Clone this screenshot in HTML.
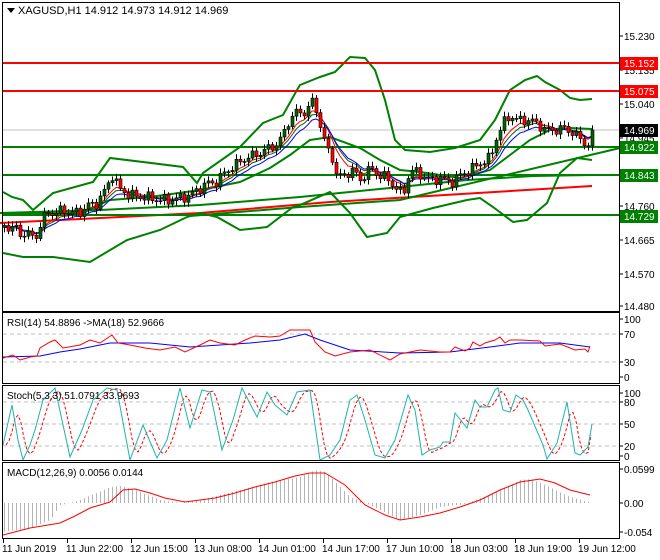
<!DOCTYPE html>
<html><head><meta charset="utf-8"><style>
html,body{margin:0;padding:0;background:#fff;}
svg{display:block;font-family:"Liberation Sans",sans-serif;font-size:10px;}
</style></head><body>
<svg id="s" width="660" height="560" xmlns="http://www.w3.org/2000/svg">
<rect width="660" height="560" fill="#fff"/>
<g id="g"></g>
<g fill="none" stroke="#000" stroke-width="1">
<rect x="2.5" y="2.5" width="617" height="309"/>
<rect x="2.5" y="312.5" width="617" height="71"/>
<rect x="2.5" y="385.5" width="617" height="75"/>
<rect x="2.5" y="462.5" width="617" height="76"/>
</g>
<path d="M7 8 L15 8 L11 13 Z" fill="#000"/>
<text x="18" y="14" font-size="11">XAGUSD,H1  14.912 14.973 14.912 14.969</text>
<text x="7" y="326">RSI(14) 54.8896  -&gt;MA(18) 52.9666</text>
<text x="7" y="399">Stoch(5,3,3) 51.0791 33.9693</text>
<text x="7" y="476">MACD(12,26,9) 0.0056 0.0144</text>
<g id="ax"></g>
</svg>
<script>
var g=document.getElementById('g'),ax=document.getElementById('ax');
var NS='http://www.w3.org/2000/svg';
function el(p,t,a,tx){var e=document.createElementNS(NS,t);for(var k in a)e.setAttribute(k,a[k]);if(tx!=null)e.textContent=tx;p.appendChild(e);return e;}
function interp(kp,x){if(x<=kp[0][0])return kp[0][1];for(var i=1;i<kp.length;i++){if(x<=kp[i][0]){var a=kp[i-1],b=kp[i];return a[1]+(b[1]-a[1])*(x-a[0])/(b[0]-a[0]);}}return kp[kp.length-1][1];}
function pl(kp,col,w,dash){var d=kp.map(function(p){return p[0]+','+p[1]}).join(' ');var a={points:d,fill:'none',stroke:col,'stroke-width':w};if(dash)a['stroke-dasharray']=dash;el(g,'polyline',a);}
function hl(y,col,w){el(g,'line',{x1:3,x2:619,y1:y,y2:y,stroke:col,'stroke-width':w});}
function dash(y){el(g,'line',{x1:3,x2:619,y1:y,y2:y,stroke:'#c0c0c0','stroke-width':1,'stroke-dasharray':'4,3'});}
// main horizontal lines
hl(130,'#c0c0c0',1);
// bollinger
var up=[[3,192],[12,197],[23,200],[33,210],[53,193],[93,182],[110,158],[143,162],[183,167],[197,183],[203,173],[240,147],[263,123],[283,115],[297,90],[300,85],[320,77],[335,72],[350,57],[365,58],[375,70],[385,100],[395,140],[405,150],[430,152],[455,148],[480,140],[495,120],[510,90],[525,80],[537,76],[545,82],[560,90],[570,98],[580,100],[592,99]];
var mid=[[3,214],[80,213],[110,200],[150,197],[200,190],[240,182],[270,168],[290,155],[310,140],[330,137],[360,148],[380,160],[400,170],[420,172],[440,175],[460,178],[490,170],[510,155],[530,140],[550,130],[570,128],[592,129]];
var lo=[[3,253],[23,257],[53,257],[90,262],[127,240],[160,230],[187,217],[200,213],[217,217],[240,230],[267,227],[293,207],[300,205],[330,192],[350,213],[367,237],[387,233],[400,217],[433,208],[467,200],[480,198],[493,207],[513,222],[527,220],[547,203],[560,173],[577,158],[592,160]];
pl([[0,223],[200,213],[330,202],[592,186]],'#ff0000',2);
pl([[0,213],[100,210],[200,205],[300,197],[400,187],[467,180],[533,176],[592,175]],'#008000',2);
pl([[190,216],[300,207],[400,200],[620,148]],'#008000',2);
pl(up,'#008000',2);pl(mid,'#008000',2);pl(lo,'#008000',2);
hl(63,'#ff0000',2);hl(91,'#ff0000',2);hl(147,'#008000',2);hl(175,'#008000',2);hl(215,'#008000',2);
// price path
var pr=[[3,225],[10,228],[15,227],[20,235],[25,232],[33,238],[37,235],[40,225],[45,215],[50,212],[55,213],[62,210],[70,213],[80,212],[88,205],[95,205],[105,190],[112,175],[120,190],[130,195],[140,197],[150,198],[160,200],[170,200],[180,198],[190,195],[200,188],[208,183],[215,183],[225,172],[235,165],[245,158],[255,155],[265,150],[275,145],[280,140],[290,118],[295,113],[305,112],[310,105],[313,100],[316,110],[320,125],[325,145],[333,160],[337,178],[345,175],[352,170],[360,180],[370,168],[378,175],[385,177],[395,187],[400,193],[404,190],[410,170],[418,173],[430,180],[440,178],[450,182],[455,180],[460,175],[470,170],[480,163],[490,158],[495,140],[500,130],[505,120],[510,115],[515,120],[525,120],[535,122],[545,130],[555,130],[565,128],[575,135],[585,143],[590,147],[593,130]];
var N=148,cl=[],xs=[];
for(var i=0;i<N;i++){var x=4+i*4;xs.push(x);cl.push(interp(pr,x)+4*Math.sin(i*1.7)+2*Math.sin(i*3.1));}
cl[N-1]=130;
// EMAs
function ema(a,n){var k=2/(n+1),r=[],v=a[0];for(var i=0;i<a.length;i++){v=a[i]*k+v*(1-k);r.push([xs[i],v.toFixed(1)]);}return r;}
pl(ema(cl,8),'#006400',1);pl(ema(cl,6),'#ff0000',1);pl(ema(cl,10).map(function(p){return [p[0],(+p[1]+1.5).toFixed(1)]}),'#0000ff',1);
for(var i=0;i<N;i++){var o=i?cl[i-1]:cl[0]+2,c=cl[i],x=xs[i];var t=Math.min(o,c),b=Math.max(o,c);if(b-t<1)b=t+1;
var hi=t-2-Math.abs(3*Math.sin(i*2.3)),lw=b+2+Math.abs(3*Math.cos(i*1.9));
el(g,'line',{x1:x+.5,x2:x+.5,y1:hi,y2:lw,stroke:'#000','stroke-width':1});
el(g,'rect',{x:x-1,y:t,width:3,height:b-t,fill:(c<o?'#006400':'#ff0000'),stroke:'#000','stroke-width':0.6});}
// RSI
dash(334);dash(362);
pl([[3,357],[40,356],[60,352],[80,349],[110,343],[150,343],[190,347],[250,343],[280,340],[305,334],[320,340],[350,350],[400,353],[450,352],[490,347],[520,343],[560,343],[590,347]],'#0000ff',1);
pl([[3,358],[13,355],[20,360],[27,358],[30,357],[37,356],[40,348],[50,342],[55,340],[63,348],[80,345],[90,340],[100,343],[112,335],[118,343],[130,345],[145,348],[160,350],[175,347],[185,352],[200,345],[210,340],[220,343],[235,345],[245,340],[255,336],[270,337],[280,336],[290,330],[300,330],[310,330],[315,342],[325,352],[335,356],[350,352],[370,350],[390,360],[400,354],[420,350],[440,352],[450,352],[455,347],[465,351],[470,348],[473,342],[480,346],[485,343],[495,340],[500,337],[505,343],[510,340],[520,340],[540,341],[545,346],[560,344],[575,350],[585,349],[588,352],[590,346]],'#ff0000',1);
// Stoch
dash(402);dash(424);dash(446);
var st=[[3,445],[12,405],[18,440],[23,460],[30,445],[35,430],[43,400],[55,388],[70,457],[82,430],[93,400],[107,388],[117,390],[130,460],[143,425],[157,458],[167,440],[180,388],[190,428],[202,390],[210,392],[222,450],[233,420],[242,388],[257,417],[267,392],[275,405],[287,415],[297,392],[310,390],[320,460],[330,455],[340,440],[350,400],[357,395],[365,420],[375,455],[385,458],[395,440],[408,395],[415,410],[422,455],[430,450],[440,447],[443,442],[450,442],[455,413],[467,428],[475,400],[480,407],[487,407],[495,390],[498,388],[503,410],[510,412],[516,395],[523,400],[528,410],[543,445],[547,459],[557,443],[567,402],[575,453],[580,455],[588,447],[592,424]];
var sg=[];for(var x=6;x<=592;x+=3){var v=(interp(st,x-3)+interp(st,x-6)+interp(st,x-9))/3;sg.push([x,v.toFixed(1)]);}
sg[sg.length-1][1]=435;
pl(sg,'#ff0000',1,'3,2');pl(st,'#20b2aa',1);
// MACD
var hk=[[3,532],[30,528],[50,520],[60,505],[70,503],[80,500],[110,487],[120,486],[135,490],[160,500],[180,503],[200,500],[240,490],[270,482],[300,477],[315,470],[325,472],[350,497],[365,503],[380,510],[400,520],[420,515],[440,507],[465,504],[475,500],[490,495],[505,488],[520,480],[530,479],[545,485],[555,490],[570,497],[585,501],[592,503]];
for(var i=0;i<N;i++){var x=xs[i],v=interp(hk,x);el(g,'line',{x1:x+.5,x2:x+.5,y1:503,y2:v,stroke:'#b4b4b4','stroke-width':1});}
pl([[3,535],[30,528],[60,523],[75,516],[90,508],[110,502],[123,490],[135,489],[150,493],[165,498],[185,502],[200,500],[215,498],[235,493],[255,487],[275,482],[295,476],[310,473],[325,473],[345,485],[365,505],[385,515],[400,520],[420,517],[440,513],[460,507],[480,500],[500,490],[520,482],[540,479],[555,483],[570,490],[590,495]],'#ff0000',1);
// axis labels
function lab(y,t){el(ax,'line',{x1:619,x2:623,y1:y,y2:y,stroke:'#000'});el(ax,'text',{x:624,y:y+4},t);}
[[36,'15.230'],[70,'15.135'],[104,'15.040'],[138,'14.945'],[206,'14.760'],[240,'14.665'],[274,'14.570'],[306,'14.480'],[319,'100'],[334,'70'],[362,'30'],[377,'0'],[393,'100'],[402,'80'],[424,'50'],[446,'20'],[456,'0'],[469,'0.0599'],[503,'0.00'],[532,'-0.054']].forEach(function(a){lab(a[0],a[1]);});
function box(y,t,c){el(ax,'rect',{x:620,y:y-6,width:38,height:13,fill:c});el(ax,'text',{x:624,y:y+4,fill:'#fff'},t);}
box(63,'15.152','#ff0000');box(91,'15.075','#ff0000');box(130,'14.969','#000');box(147,'14.922','#008000');box(175,'14.843','#008000');box(216,'14.729','#008000');
['11 Jun 2019','11 Jun 22:00','12 Jun 15:00','13 Jun 08:00','14 Jun 01:00','14 Jun 17:00','17 Jun 10:00','18 Jun 03:00','18 Jun 19:00','19 Jun 12:00'].forEach(function(t,i){var x=3+i*64;el(ax,'line',{x1:x+.5,x2:x+.5,y1:539,y2:543,stroke:'#000'});el(ax,'text',{x:x-1,y:552},t);});
</script>
</body></html>
